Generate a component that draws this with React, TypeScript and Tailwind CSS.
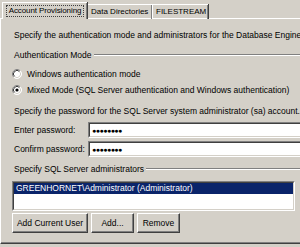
import type { ReactNode } from "react";

const FONT = "font-['Liberation_Sans',Arial,sans-serif]";

export default function App() {
  return (
    <div className={`relative h-[247px] w-[300px] overflow-hidden bg-[#d4d0c8] text-[8.5px] leading-none text-black ${FONT}`}>
      <div className="flex h-[19px] items-end whitespace-nowrap pl-[2px] pt-[2px] text-[8px]">
        <div className="relative z-10 flex h-[17px] w-[85px] items-start border-l border-t border-white bg-[#d4d0c8] shadow-[inset_-1px_0_0_#808080,1px_0_0_#404040]">
          <span className="ml-[3px] mt-[2px] flex h-[12px] w-[78px] items-center justify-center border border-dotted border-[#404040] tracking-[-0.1px]">
            Account Provisioning
          </span>
        </div>
        <Tab width="w-[65px]">Data Directories</Tab>
        <Tab width="w-[56px]">FILESTREAM</Tab>
      </div>

      <div className="-mt-px w-[310px] border-b border-l border-t border-[#404040] border-l-white border-t-white">
        <div className="flex flex-col border-b border-[#808080] pb-[9px] pl-[13px]">
          <Row className="mt-[10px]">
            Specify the authentication mode and administrators for the Database Engine.
          </Row>
          <GroupTitle className="mt-[8px]">Authentication Mode</GroupTitle>
          <Radio className="mt-[7px]" checked={false}>
            Windows authentication mode
          </Radio>
          <Radio className="mt-[4px]" checked>
            Mixed Mode (SQL Server authentication and Windows authentication)
          </Radio>
          <Row className="mt-[9px]">
            Specify the password for the SQL Server system administrator (sa) account.
          </Row>
          <PasswordRow className="mt-[5px]" label="Enter password:" />
          <PasswordRow className="mt-[3px]" label="Confirm password:" />
          <GroupTitle className="mt-[6px]">Specify SQL Server administrators</GroupTitle>

          <div className="-ml-[2px] mt-[6px] h-[30px] w-[283px] border border-[#808080] border-b-white border-r-white">
            <div className="h-full w-full border border-[#404040] border-b-[#d4d0c8] border-r-[#d4d0c8] bg-white">
              <div className="flex h-[11px] items-center bg-[#0a246a] pl-[2px] text-white">
                GREENHORNET\Administrator (Administrator)
              </div>
            </div>
          </div>

          <div className="-ml-[2px] mt-[2px] flex gap-[3px]">
            <Button width="w-[76px]">Add Current User</Button>
            <Button width="w-[43px]">Add...</Button>
            <Button width="w-[43px]">Remove</Button>
          </div>
        </div>
      </div>
    </div>
  );
}

function Tab({ width, children }: { width: string; children: ReactNode }) {
  return (
    <div className={`flex h-[15px] ${width} items-center border-l border-t border-white pl-[3px] shadow-[inset_-1px_0_0_#808080,1px_0_0_#404040]`}>
      {children}
    </div>
  );
}

function Row({ className, children }: { className: string; children: ReactNode }) {
  return <div className={`flex h-[12px] items-center whitespace-nowrap ${className}`}>{children}</div>;
}

function GroupTitle({ className, children }: { className: string; children: ReactNode }) {
  return (
    <div className={`flex h-[12px] items-center gap-[2px] whitespace-nowrap ${className}`}>
      <span>{children}</span>
      <div className="h-[2px] flex-1 border-b border-t border-[#808080] border-b-white" />
    </div>
  );
}

function Radio({ className, checked, children }: { className: string; checked: boolean; children: ReactNode }) {
  return (
    <div className={`-ml-[2px] flex h-[12px] items-center whitespace-nowrap ${className}`}>
      <svg width="10" height="10" viewBox="0 0 10 10" className="mr-[5px] shrink-0">
        <circle cx="5" cy="5" r="4.5" fill="white" />
        <path d="M1.8 8.2 A4.5 4.5 0 0 1 8.2 1.8" fill="none" stroke="#808080" strokeWidth="1" />
        <path d="M2.5 7.5 A3.5 3.5 0 0 1 7.5 2.5" fill="none" stroke="#404040" strokeWidth="1" />
        <path d="M8.2 1.8 A4.5 4.5 0 0 1 1.8 8.2" fill="none" stroke="#ffffff" strokeWidth="1" />
        <path d="M7.5 2.5 A3.5 3.5 0 0 1 2.5 7.5" fill="none" stroke="#d4d0c8" strokeWidth="1" />
        {checked && <circle cx="5" cy="5" r="1.6" fill="black" />}
      </svg>
      {children}
    </div>
  );
}

function PasswordRow({ className, label }: { className: string; label: string }) {
  return (
    <div className={`flex h-[16px] items-center ${className}`}>
      <span className="w-[74px] whitespace-nowrap">{label}</span>
      <div className="h-[16px] flex-1 border border-[#808080] border-b-white border-r-white">
        <div className="flex h-full items-center border border-[#404040] border-b-[#d4d0c8] border-r-[#d4d0c8] bg-white pl-[2px] text-[7px] tracking-[-0.5px]">
          ●●●●●●●●
        </div>
      </div>
    </div>
  );
}

function Button({ width, children }: { width: string; children: ReactNode }) {
  return (
    <div className={`flex h-[20px] ${width} items-center justify-center whitespace-nowrap border border-white border-b-[#404040] border-r-[#404040] shadow-[inset_-1px_-1px_0_#808080]`}>
      {children}
    </div>
  );
}
